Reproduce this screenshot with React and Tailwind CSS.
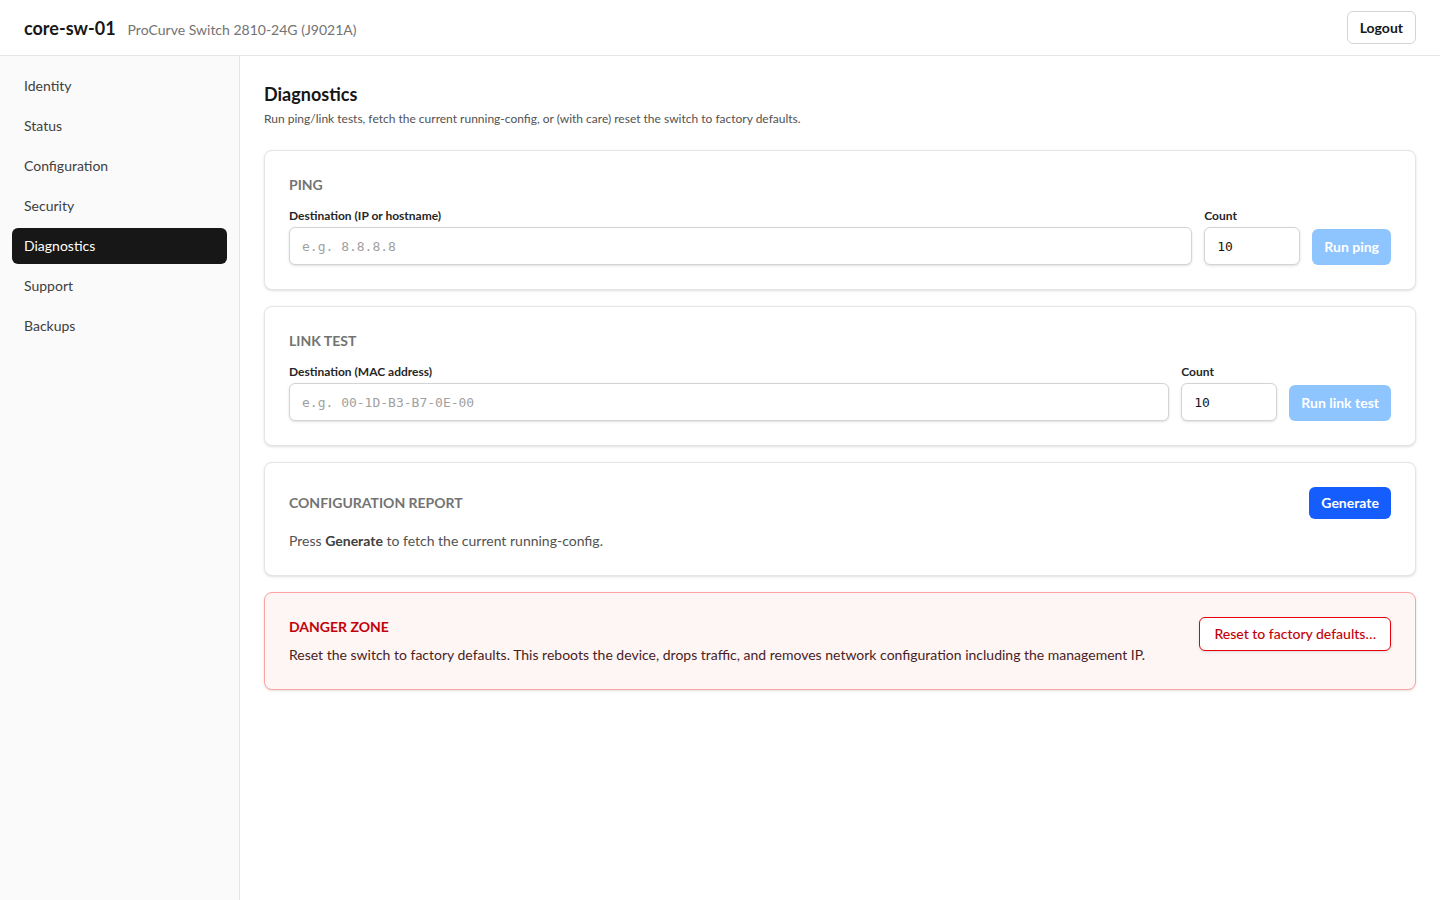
import { useState } from 'react';

const NAV = ['Identity', 'Status', 'Configuration', 'Security', 'Diagnostics', 'Support', 'Backups'];

function Field({ label, placeholder, grow, value }) {
  return (
    <div className={grow ? 'flex-1 flex flex-col' : 'w-24 flex flex-col'}>
      <label className="text-xs font-bold text-neutral-800 leading-4 mb-[3px]">{label}</label>
      <input
        defaultValue={value}
        placeholder={placeholder}
        className="h-[38px] rounded-md border border-neutral-300 bg-white px-3 text-[13px] text-neutral-900 shadow-sm placeholder:text-neutral-400 outline-none font-['DejaVu_Sans_Mono',monospace]"
      />
    </div>
  );
}

function TestCard({ title, label, placeholder, button }) {
  return (
    <section className="rounded-lg border border-neutral-200 bg-white p-6 shadow-sm">
      <h3 className="text-sm font-bold uppercase text-neutral-500 leading-5">{title}</h3>
      <div className="mt-[13px] flex items-end gap-3">
        <Field label={label} placeholder={placeholder} grow />
        <Field label="Count" value="10" />
        <button className="h-9 rounded-md bg-[#8ec5ff] px-3 text-sm font-bold text-white">{button}</button>
      </div>
    </section>
  );
}

export default function App() {
  const [active, setActive] = useState('Diagnostics');

  return (
    <div className="min-h-screen flex flex-col bg-white text-neutral-900 font-['Lato',sans-serif]">
      <header className="h-14 shrink-0 border-b border-neutral-200 flex items-center justify-between px-6">
        <div className="flex items-baseline gap-3">
          <span className="text-lg font-bold text-neutral-900">core-sw-01</span>
          <span className="text-sm text-neutral-500">ProCurve Switch 2810-24G (J9021A)</span>
        </div>
        <button className="h-[33px] rounded-md border border-neutral-300 bg-white px-3 text-sm font-bold text-neutral-900">
          Logout
        </button>
      </header>

      <div className="flex flex-1">
        <aside className="w-60 shrink-0 border-r border-neutral-200 bg-neutral-50 p-3">
          <nav className="flex flex-col gap-1">
            {NAV.map((item) => (
              <button
                key={item}
                onClick={() => setActive(item)}
                className={
                  item === active
                    ? 'h-9 rounded-md bg-neutral-900 px-3 text-left text-sm text-white'
                    : 'h-9 rounded-md px-3 text-left text-sm text-neutral-700'
                }
              >
                {item}
              </button>
            ))}
          </nav>
        </aside>

        <main className="flex-1 p-6">
          <h1 className="text-lg font-bold leading-7">Diagnostics</h1>
          <p className="mt-[3px] text-xs text-neutral-600 leading-4">
            Run ping/link tests, fetch the current running-config, or (with care) reset the switch to factory defaults.
          </p>

          <div className="mt-[23px] flex flex-col gap-4">
            <TestCard title="Ping" label="Destination (IP or hostname)" placeholder="e.g. 8.8.8.8" button="Run ping" />
            <TestCard title="Link test" label="Destination (MAC address)" placeholder="e.g. 00-1D-B3-B7-0E-00" button="Run link test" />

            <section className="rounded-lg border border-neutral-200 bg-white p-6 shadow-sm">
              <div className="flex items-center justify-between">
                <h3 className="text-sm font-bold uppercase text-neutral-500 leading-5">Configuration report</h3>
                <button className="h-8 rounded-md bg-[#155dfc] px-3 text-sm font-bold text-white">Generate</button>
              </div>
              <p className="mt-3 text-sm leading-5 text-neutral-600">
                Press <span className="font-bold text-neutral-700">Generate</span> to fetch the current running-config.
              </p>
            </section>

            <section className="rounded-lg border border-red-300 bg-[#fef5f5] p-6 shadow-sm">
              <div className="flex items-start justify-between gap-6">
                <div>
                  <h3 className="text-sm font-bold uppercase text-red-700 leading-5">Danger zone</h3>
                  <p className="mt-2 text-sm leading-5 text-[#4a1d1d]">
                    Reset the switch to factory defaults. This reboots the device, drops traffic, and removes network configuration including the management IP.
                  </p>
                </div>
                <button className="h-[34px] shrink-0 rounded-md border border-red-600 bg-white px-[14px] text-sm font-medium text-red-700 shadow-sm">
                  Reset to factory defaults…
                </button>
              </div>
            </section>
          </div>
        </main>
      </div>
    </div>
  );
}
